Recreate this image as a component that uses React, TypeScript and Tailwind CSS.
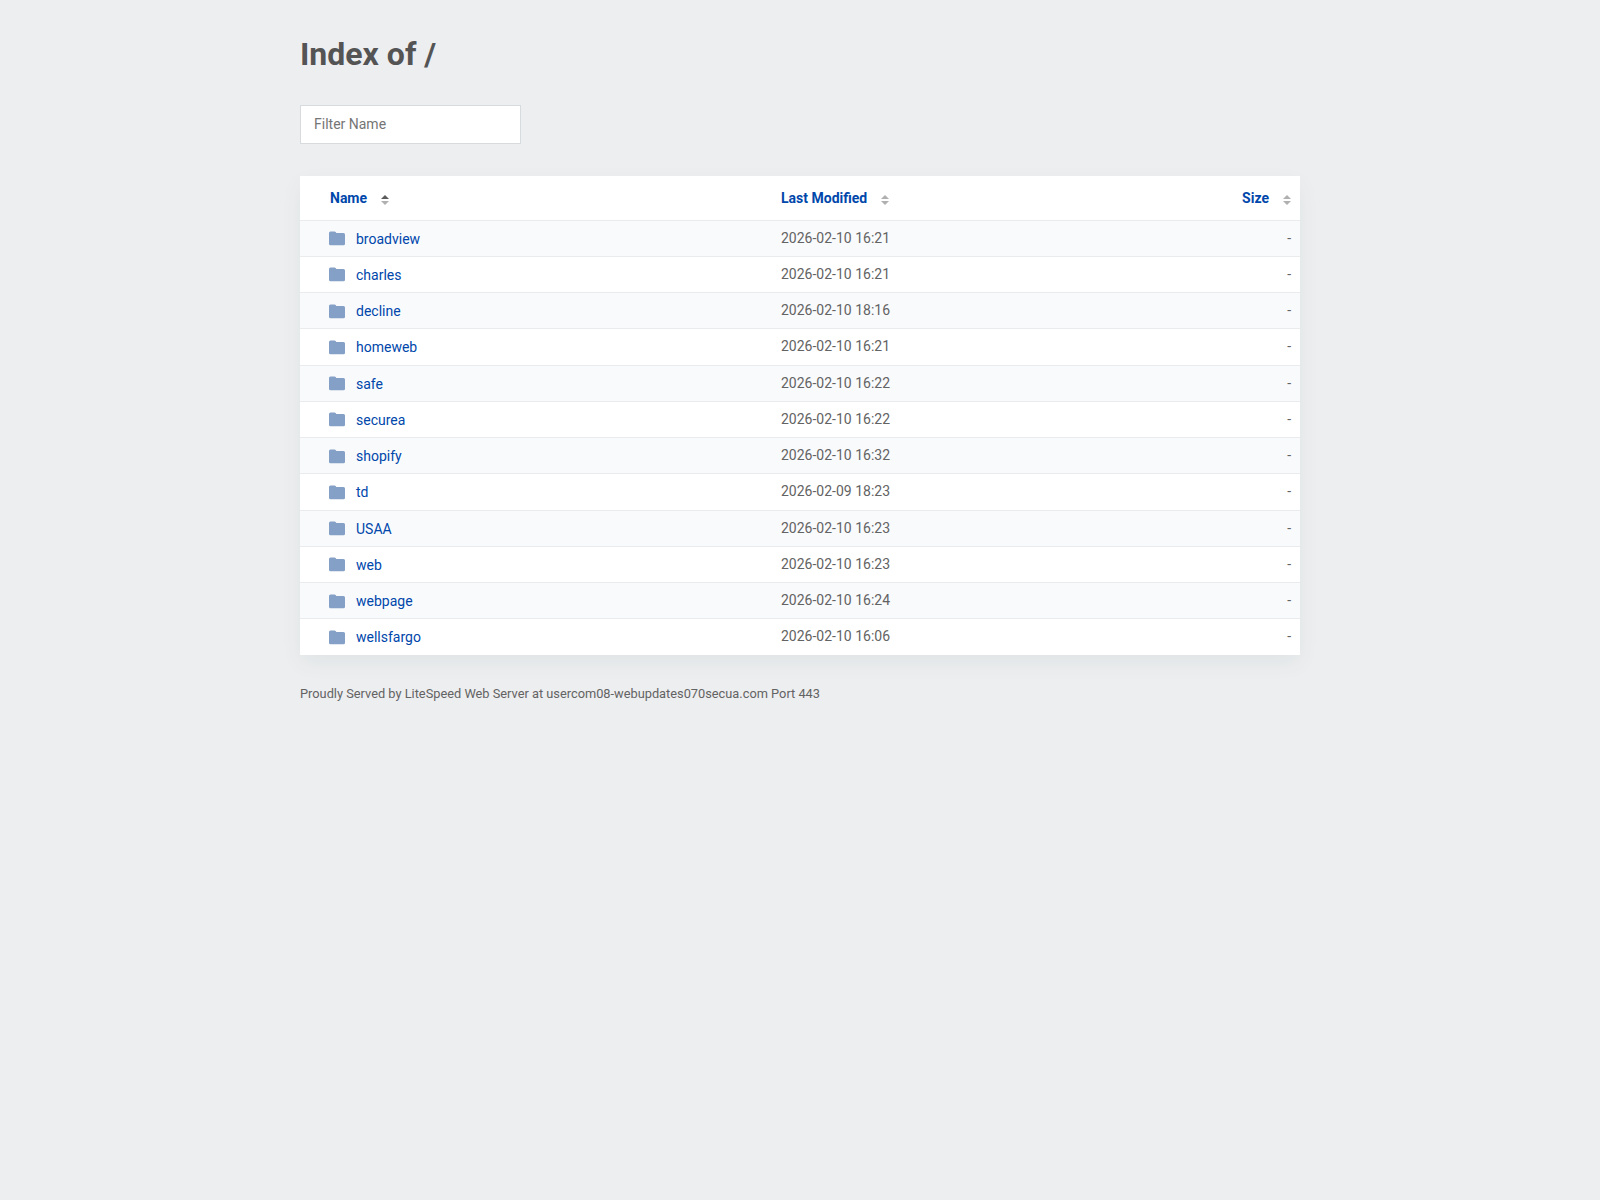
import { useState } from "react";

type SortKey = "name" | "modified" | "size";

type Entry = { name: string; modified: string; size: string };

const entries: Entry[] = [
    { name: "broadview", modified: "2026-02-10 16:21", size: "-" },
    { name: "charles", modified: "2026-02-10 16:21", size: "-" },
    { name: "decline", modified: "2026-02-10 18:16", size: "-" },
    { name: "homeweb", modified: "2026-02-10 16:21", size: "-" },
    { name: "safe", modified: "2026-02-10 16:22", size: "-" },
    { name: "securea", modified: "2026-02-10 16:22", size: "-" },
    { name: "shopify", modified: "2026-02-10 16:32", size: "-" },
    { name: "td", modified: "2026-02-09 18:23", size: "-" },
    { name: "USAA", modified: "2026-02-10 16:23", size: "-" },
    { name: "web", modified: "2026-02-10 16:23", size: "-" },
    { name: "webpage", modified: "2026-02-10 16:24", size: "-" },
    { name: "wellsfargo", modified: "2026-02-10 16:06", size: "-" },
];

const columns: { key: SortKey; label: string; className: string }[] = [
    { key: "name", label: "Name", className: "w-[46%] pl-[30px] text-left" },
    { key: "modified", label: "Last Modified", className: "pl-[21px] text-left" },
    { key: "size", label: "Size", className: "pr-[9px] text-right" },
];

function FolderIcon() {
    return (
        <svg width="16" height="16" viewBox="0 0 16 16" fill="#85a0c6" className="shrink-0" aria-hidden="true">
            <path d="M1.500 0.500H5.500Q6.200 0.500 6.600 1.100L7.400 2.100H14.500A1.500 1.500 0 0 1 16 3.600V12.700A1.500 1.500 0 0 1 14.500 14.200H1.500A1.500 1.500 0 0 1 0 12.700V2A1.500 1.500 0 0 1 1.500 0.500z" />
        </svg>
    );
}

function SortIcon({ up, down }: { up: boolean; down: boolean }) {
    return (
        <svg width="8" height="10" viewBox="0 0 8 10" className="mt-[3px]" aria-hidden="true">
            <path d="M0 4L4 0L8 4z" fill={up ? "#5c5c5c" : "#b0b0b0"} />
            <path d="M0 6L4 10L8 6z" fill={down ? "#5c5c5c" : "#b0b0b0"} />
        </svg>
    );
}

export default function App() {
    const [filter, setFilter] = useState("");
    const [sort, setSort] = useState<{ key: SortKey; asc: boolean }>({ key: "name", asc: true });

    const rows = entries
        .filter(e => e.name.toLowerCase().includes(filter.toLowerCase()))
        .sort((a, b) => {
            const order = a[sort.key].toLowerCase().localeCompare(b[sort.key].toLowerCase());
            return sort.asc ? order : -order;
        });

    function toggleSort(key: SortKey) {
        setSort(prev => ({ key, asc: prev.key === key ? !prev.asc : true }));
    }

    return (
        <div className="min-h-screen bg-[#edeef0] px-5 pt-[35px] pb-10 font-[Roboto,sans-serif] text-sm text-[#636363]">
            <main className="mx-auto max-w-[1000px]">
                <h1 className="text-[32px] leading-[38px] font-bold text-[#545454]">Index of /</h1>

                <input
                    type="text"
                    aria-label="Filter Name"
                    placeholder="Filter Name"
                    value={filter}
                    onChange={e => setFilter(e.target.value)}
                    className="mt-8 block h-[39px] w-[221px] border border-[#d8dbdd] bg-white px-[13px] pb-[2px] text-sm outline-none placeholder:text-[#757575]"
                />

                <table className="mt-8 w-full border-collapse bg-white shadow-[0_8px_20px_0_rgba(0,80,70,0.06)]">
                    <thead>
                        <tr>
                            {columns.map(col => (
                                <th key={col.key} className={`h-11 py-0 ${col.className}`}>
                                    <button
                                        onClick={() => toggleSort(col.key)}
                                        className="inline-flex cursor-pointer items-center gap-[14px] align-middle font-bold text-[#0047ab]"
                                    >
                                        {col.label}
                                        <SortIcon
                                            up={sort.key === col.key && sort.asc}
                                            down={sort.key === col.key && !sort.asc}
                                        />
                                    </button>
                                </th>
                            ))}
                        </tr>
                    </thead>
                    <tbody>
                        {rows.map(e => (
                            <tr key={e.name} className="border-t border-[#e9ebec] leading-snug odd:bg-[#f9fafc]">
                                <td className="pt-[9px] pb-[7px] pl-[29px]">
                                    <a href={`/${e.name}/`} className="flex items-center gap-[11px] text-[#0047ab] hover:underline">
                                        <FolderIcon />
                                        {e.name}
                                    </a>
                                </td>
                                <td className="py-2 pl-[21px]">{e.modified}</td>
                                <td className="py-2 pr-[9px] text-right">{e.size}</td>
                            </tr>
                        ))}
                    </tbody>
                </table>

                <footer className="mt-[30px] text-base leading-4">
                    <small>
                        Proudly Served by LiteSpeed Web Server at usercom08-webupdates070secua.com Port 443
                    </small>
                </footer>
            </main>
        </div>
    );
}
